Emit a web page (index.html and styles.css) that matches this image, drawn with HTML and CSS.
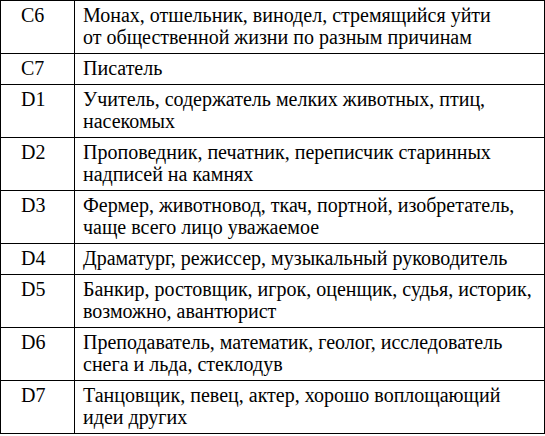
FILE: index.html
```html
<!DOCTYPE html>
<html lang="ru">
<head>
<meta charset="utf-8">
<title>Таблица</title>
<link rel="stylesheet" href="styles.css">
</head>
<body>
<table class="codes">
  <tr><td class="code">C6</td><td class="desc">Монах, отшельник, винодел, стремящийся уйти<br>от общественной жизни по разным причинам</td></tr>
  <tr><td class="code">C7</td><td class="desc">Писатель</td></tr>
  <tr><td class="code">D1</td><td class="desc">Учитель, содержатель мелких животных, птиц,<br>насекомых</td></tr>
  <tr><td class="code">D2</td><td class="desc">Проповедник, печатник, переписчик старинных<br>надписей на камнях</td></tr>
  <tr><td class="code">D3</td><td class="desc">Фермер, животновод, ткач, портной, изобретатель,<br>чаще всего лицо уважаемое</td></tr>
  <tr><td class="code">D4</td><td class="desc">Драматург, режиссер, музыкальный руководитель</td></tr>
  <tr><td class="code">D5</td><td class="desc">Банкир, ростовщик, игрок, оценщик, судья, историк,<br>возможно, авантюрист</td></tr>
  <tr><td class="code">D6</td><td class="desc">Преподаватель, математик, геолог, исследователь<br>снега и льда, стеклодув</td></tr>
  <tr><td class="code">D7</td><td class="desc">Танцовщик, певец, актер, хорошо воплощающий<br>идеи других</td></tr>
</table>
</body>
</html>
```
FILE: styles.css
```css
html, body {
  margin: 0;
  padding: 0;
  background: #fff;
}
.codes {
  border-collapse: collapse;
  width: 545px;
  font-family: "Liberation Serif", "Times New Roman", serif;
  font-size: 20px;
  line-height: 22px;
  color: #000;
}
.codes td {
  border: 1.5px solid #000;
  padding: 3px 6px 5px 8px;
  vertical-align: top;
  white-space: nowrap;
}
.codes .code {
  width: 53px;
  padding-left: 20px;
  padding-right: 0;
}
```
